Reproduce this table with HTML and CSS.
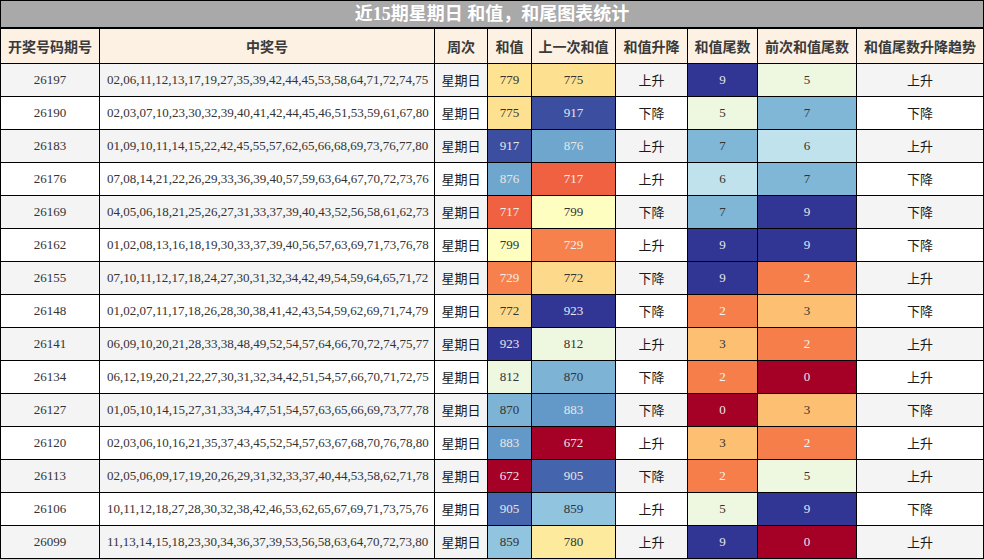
FILE: index.html
```html
<!DOCTYPE html>
<html lang="zh">
<head>
<meta charset="utf-8">
<link rel="stylesheet" href="styles.css">
</head>
<body>
<table class="stats">
<colgroup>
<col class="w-issue"><col class="w-nums"><col class="w-week"><col class="w-sum"><col class="w-prev"><col class="w-trend"><col class="w-tail"><col class="w-ptail"><col class="w-ttrend">
</colgroup>
<thead>
<tr class="title-row"><th colspan="9">近15期星期日 和值，和尾图表统计</th></tr>
<tr class="head-row"><th>开奖号码期号</th><th>中奖号</th><th>周次</th><th>和值</th><th>上一次和值</th><th>和值升降</th><th>和值尾数</th><th>前次和值尾数</th><th>和值尾数升降趋势</th></tr>
</thead>
<tbody>
<tr><td>26197</td><td class="nums">02,06,11,12,13,17,19,27,35,39,42,44,45,53,58,64,71,72,74,75</td><td class="cn">星期日</td><td class="v779">779</td><td class="v775">775</td><td class="cn">上升</td><td class="t9">9</td><td class="t5">5</td><td class="cn">上升</td></tr>
<tr><td>26190</td><td class="nums">02,03,07,10,23,30,32,39,40,41,42,44,45,46,51,53,59,61,67,80</td><td class="cn">星期日</td><td class="v775">775</td><td class="v917">917</td><td class="cn">下降</td><td class="t5">5</td><td class="t7">7</td><td class="cn">下降</td></tr>
<tr><td>26183</td><td class="nums">01,09,10,11,14,15,22,42,45,55,57,62,65,66,68,69,73,76,77,80</td><td class="cn">星期日</td><td class="v917">917</td><td class="v876">876</td><td class="cn">上升</td><td class="t7">7</td><td class="t6">6</td><td class="cn">上升</td></tr>
<tr><td>26176</td><td class="nums">07,08,14,21,22,26,29,33,36,39,40,57,59,63,64,67,70,72,73,76</td><td class="cn">星期日</td><td class="v876">876</td><td class="v717">717</td><td class="cn">上升</td><td class="t6">6</td><td class="t7">7</td><td class="cn">下降</td></tr>
<tr><td>26169</td><td class="nums">04,05,06,18,21,25,26,27,31,33,37,39,40,43,52,56,58,61,62,73</td><td class="cn">星期日</td><td class="v717">717</td><td class="v799">799</td><td class="cn">下降</td><td class="t7">7</td><td class="t9">9</td><td class="cn">下降</td></tr>
<tr><td>26162</td><td class="nums">01,02,08,13,16,18,19,30,33,37,39,40,56,57,63,69,71,73,76,78</td><td class="cn">星期日</td><td class="v799">799</td><td class="v729">729</td><td class="cn">上升</td><td class="t9">9</td><td class="t9">9</td><td class="cn">下降</td></tr>
<tr><td>26155</td><td class="nums">07,10,11,12,17,18,24,27,30,31,32,34,42,49,54,59,64,65,71,72</td><td class="cn">星期日</td><td class="v729">729</td><td class="v772">772</td><td class="cn">下降</td><td class="t9">9</td><td class="t2">2</td><td class="cn">上升</td></tr>
<tr><td>26148</td><td class="nums">01,02,07,11,17,18,26,28,30,38,41,42,43,54,59,62,69,71,74,79</td><td class="cn">星期日</td><td class="v772">772</td><td class="v923">923</td><td class="cn">下降</td><td class="t2">2</td><td class="t3">3</td><td class="cn">下降</td></tr>
<tr><td>26141</td><td class="nums">06,09,10,20,21,28,33,38,48,49,52,54,57,64,66,70,72,74,75,77</td><td class="cn">星期日</td><td class="v923">923</td><td class="v812">812</td><td class="cn">上升</td><td class="t3">3</td><td class="t2">2</td><td class="cn">上升</td></tr>
<tr><td>26134</td><td class="nums">06,12,19,20,21,22,27,30,31,32,34,42,51,54,57,66,70,71,72,75</td><td class="cn">星期日</td><td class="v812">812</td><td class="v870">870</td><td class="cn">下降</td><td class="t2">2</td><td class="t0">0</td><td class="cn">上升</td></tr>
<tr><td>26127</td><td class="nums">01,05,10,14,15,27,31,33,34,47,51,54,57,63,65,66,69,73,77,78</td><td class="cn">星期日</td><td class="v870">870</td><td class="v883">883</td><td class="cn">下降</td><td class="t0">0</td><td class="t3">3</td><td class="cn">下降</td></tr>
<tr><td>26120</td><td class="nums">02,03,06,10,16,21,35,37,43,45,52,54,57,63,67,68,70,76,78,80</td><td class="cn">星期日</td><td class="v883">883</td><td class="v672">672</td><td class="cn">上升</td><td class="t3">3</td><td class="t2">2</td><td class="cn">上升</td></tr>
<tr><td>26113</td><td class="nums">02,05,06,09,17,19,20,26,29,31,32,33,37,40,44,53,58,62,71,78</td><td class="cn">星期日</td><td class="v672">672</td><td class="v905">905</td><td class="cn">下降</td><td class="t2">2</td><td class="t5">5</td><td class="cn">上升</td></tr>
<tr><td>26106</td><td class="nums">10,11,12,18,27,28,30,32,38,42,46,53,62,65,67,69,71,73,75,76</td><td class="cn">星期日</td><td class="v905">905</td><td class="v859">859</td><td class="cn">上升</td><td class="t5">5</td><td class="t9">9</td><td class="cn">下降</td></tr>
<tr><td>26099</td><td class="nums">11,13,14,15,18,23,30,34,36,37,39,53,56,58,63,64,70,72,73,80</td><td class="cn">星期日</td><td class="v859">859</td><td class="v780">780</td><td class="cn">上升</td><td class="t9">9</td><td class="t0">0</td><td class="cn">上升</td></tr>
</tbody>
</table>
</body>
</html>
```
FILE: styles.css
```css
html, body {
  margin: 0;
  padding: 0;
  background: #ffffff;
}

.stats {
  border-collapse: collapse;
  table-layout: fixed;
  width: 983px;
  font-family: "Liberation Serif", "Noto Sans CJK SC", serif;
  font-size: 13px;
  color: #333333;
}

.w-issue { width: 99px; }
.w-nums { width: 335px; }
.w-week { width: 53px; }
.w-sum { width: 44px; }
.w-prev { width: 84px; }
.w-trend { width: 72px; }
.w-tail { width: 70px; }
.w-ptail { width: 99px; }
.w-ttrend { width: 127px; }

.stats th,
.stats td {
  border: 1px solid #000000;
  padding: 0;
  text-align: center;
  white-space: nowrap;
  overflow: hidden;
}

.title-row th {
  height: 26px;
  background: #a9a9a9;
  color: #ffffff;
  font-size: 18px;
  font-weight: bold;
  line-height: 26px;
  border-bottom-width: 2px;
}

.head-row th {
  height: 34px;
  background: #fdf1e3;
  color: #3a3a3a;
  font-family: "Noto Sans CJK SC", sans-serif;
  font-size: 14px;
  font-weight: bold;
  line-height: 20px;
}

.stats td {
  height: 32px;
  line-height: 20px;
}

.stats tbody tr:nth-child(odd) { background: #f4f4f4; }
.stats tbody tr:nth-child(even) { background: #ffffff; }

.stats td.nums {
  text-align: left;
  padding-left: 7px;
}

.stats td.cn {
  font-family: "Noto Sans CJK SC", sans-serif;
  font-size: 13px;
  color: #1a1a1a;
}

/* sum colour scale */
.stats td.v672 { background: #a50026; color: #e8e8e8; }
.stats td.v717 { background: #ef6141; color: #eeeeee; }
.stats td.v729 { background: #f6814c; color: #eeeeee; }
.stats td.v772 { background: #fdda8b; }
.stats td.v775 { background: #fee190; }
.stats td.v779 { background: #fee393; }
.stats td.v780 { background: #feea9d; }
.stats td.v799 { background: #fefec0; }
.stats td.v812 { background: #eef7e0; }
.stats td.v859 { background: #91c4df; }
.stats td.v870 { background: #7db3d5; }
.stats td.v876 { background: #6ea6cd; color: #e6e6e6; }
.stats td.v883 { background: #6399c8; color: #e6e6e6; }
.stats td.v905 { background: #4465ad; color: #e6e6e6; }
.stats td.v917 { background: #3b4ea0; color: #e6e6e6; }
.stats td.v923 { background: #313695; color: #e6e6e6; }

/* tail colour scale */
.stats td.t0 { background: #a50026; color: #e8e8e8; }
.stats td.t2 { background: #f67e4b; color: #f4f4f4; }
.stats td.t3 { background: #fdbf71; }
.stats td.t5 { background: #eef7e0; }
.stats td.t6 { background: #bfe2ed; }
.stats td.t7 { background: #80b6d6; }
.stats td.t9 { background: #313695; color: #e6e6e6; }
```
